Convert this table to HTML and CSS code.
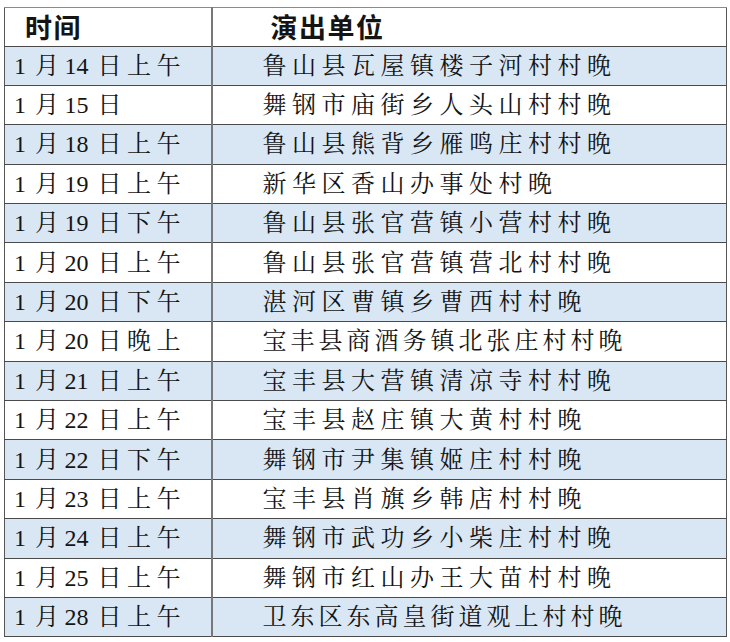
FILE: index.html
```html
<!DOCTYPE html>
<html lang="zh">
<head>
<meta charset="utf-8">
<title>演出安排</title>
<link rel="stylesheet" href="styles.css">
</head>
<body>
<table class="sched">
  <colgroup><col class="col-time"><col class="col-unit"></colgroup>
  <thead>
    <tr class="head"><th class="c-time">时间</th><th class="c-unit">演出单位</th></tr>
  </thead>
  <tbody>
    <tr class="blue"><td class="c-time"><span class="n">1</span>月<span class="n">14</span>日上午</td><td class="c-unit">鲁山县瓦屋镇楼子河村村晚</td></tr>
    <tr><td class="c-time"><span class="n">1</span>月<span class="n">15</span>日</td><td class="c-unit">舞钢市庙街乡人头山村村晚</td></tr>
    <tr class="blue"><td class="c-time"><span class="n">1</span>月<span class="n">18</span>日上午</td><td class="c-unit">鲁山县熊背乡雁鸣庄村村晚</td></tr>
    <tr><td class="c-time"><span class="n">1</span>月<span class="n">19</span>日上午</td><td class="c-unit">新华区香山办事处村晚</td></tr>
    <tr class="blue"><td class="c-time"><span class="n">1</span>月<span class="n">19</span>日下午</td><td class="c-unit">鲁山县张官营镇小营村村晚</td></tr>
    <tr><td class="c-time"><span class="n">1</span>月<span class="n">20</span>日上午</td><td class="c-unit">鲁山县张官营镇营北村村晚</td></tr>
    <tr class="blue"><td class="c-time"><span class="n">1</span>月<span class="n">20</span>日下午</td><td class="c-unit">湛河区曹镇乡曹西村村晚</td></tr>
    <tr><td class="c-time"><span class="n">1</span>月<span class="n">20</span>日晚上</td><td class="c-unit long">宝丰县商酒务镇北张庄村村晚</td></tr>
    <tr class="blue"><td class="c-time"><span class="n">1</span>月<span class="n">21</span>日上午</td><td class="c-unit">宝丰县大营镇清凉寺村村晚</td></tr>
    <tr><td class="c-time"><span class="n">1</span>月<span class="n">22</span>日上午</td><td class="c-unit">宝丰县赵庄镇大黄村村晚</td></tr>
    <tr class="blue"><td class="c-time"><span class="n">1</span>月<span class="n">22</span>日下午</td><td class="c-unit">舞钢市尹集镇姬庄村村晚</td></tr>
    <tr><td class="c-time"><span class="n">1</span>月<span class="n">23</span>日上午</td><td class="c-unit">宝丰县肖旗乡韩店村村晚</td></tr>
    <tr class="blue"><td class="c-time"><span class="n">1</span>月<span class="n">24</span>日上午</td><td class="c-unit">舞钢市武功乡小柴庄村村晚</td></tr>
    <tr><td class="c-time"><span class="n">1</span>月<span class="n">25</span>日上午</td><td class="c-unit">舞钢市红山办王大苗村村晚</td></tr>
    <tr class="blue"><td class="c-time"><span class="n">1</span>月<span class="n">28</span>日上午</td><td class="c-unit long">卫东区东高皇街道观上村村晚</td></tr>
  </tbody>
</table>
</body>
</html>
```
FILE: styles.css
```css
html, body {
  margin: 0;
  padding: 0;
  background: #ffffff;
}
body {
  padding: 7px 0 0 4px;
}
.sched {
  border-collapse: collapse;
  width: 722px;
  table-layout: fixed;
  color: #141414;
  border: 1.5px solid #555;
  border-top-color: #8a8a8a;
}
.col-time { width: 207px; }
.col-unit { width: 515px; }
.sched th, .sched td {
  box-sizing: border-box;
  padding: 0;
  text-align: left;
  white-space: nowrap;
  overflow: hidden;
  border-top: 1.5px solid #4a4a4a;
  border-bottom: 1.5px solid #4a4a4a;
}
.sched th.c-time, .sched td.c-time {
  border-right: 2px solid #777;
}
.head th {
  height: 38.5px;
  font-family: "Noto Sans CJK SC", "Noto Sans", sans-serif;
  font-weight: 700;
  font-size: 27px;
  letter-spacing: 1.5px;
  line-height: 1;
  border-top-color: #8a8a8a;
}
.head th.c-time { padding-left: 20px; }
.head th.c-unit { padding-left: 58px; }
.sched td {
  height: 39.4px;
  font-family: "Liberation Serif", "Noto Serif CJK SC", "Noto Sans CJK SC", serif;
  font-size: 24px;
  letter-spacing: 5.5px;
  line-height: 1;
}
.sched td .n {
  letter-spacing: 0;
  margin-right: 9px;
}
.sched td.c-time { padding-left: 9px; }
.sched td.c-unit { padding-left: 50px; }
.sched td.c-unit.long { letter-spacing: 4px; }
.blue td {
  background: #d9e7f4;
}
```
